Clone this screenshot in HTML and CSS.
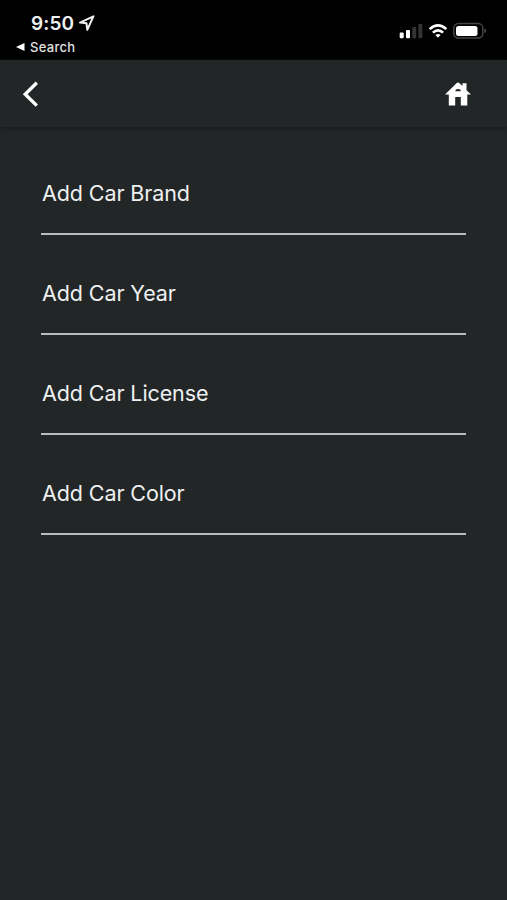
FILE: index.html
```html
<!DOCTYPE html>
<html lang="en">
<head>
<meta charset="utf-8">
<meta name="viewport" content="width=device-width">
<title>Add Car</title>
<link rel="stylesheet" href="styles.css">
</head>
<body>
<header class="status">
  <div class="status-left">
    <div class="clock"><span class="time">9:50</span>
      <svg class="location" width="18" height="18" viewBox="0 0 18 18"><path d="M2 8.6 15.4 2.3 9.3 15.8 8.5 9.3Z" fill="none" stroke="#f2f2f2" stroke-width="2" stroke-linejoin="round"/></svg>
    </div>
    <div class="return"><svg width="9" height="8" viewBox="0 0 9 8"><path d="M0 4 8.5 0V8Z" fill="#fff"/></svg><span class="return-label">Search</span></div>
  </div>
  <svg class="indicators" width="88" height="18" viewBox="0 0 88 18">
    <g fill="#fff"><rect x="0.7" y="10.5" width="4" height="5.7" rx="1"/><rect x="7" y="8" width="4" height="8.2" rx="1"/></g>
    <g fill="#333"><rect x="13.2" y="5" width="4" height="11.2" rx="1"/><rect x="19.4" y="2" width="4" height="14.2" rx="1"/></g>
    <g fill="none" stroke="#fff" stroke-width="2.6"><path d="M30.7 7.1Q39-.5 47.3 7.1"/><path d="M33.9 10.6Q39 6 44.1 10.6"/></g>
    <path d="M36.4 12.9Q39 10.9 41.6 12.9L39 15.7Z" fill="#fff"/>
    <rect x="54.8" y="1.6" width="29" height="14.5" rx="4.5" fill="none" stroke="#444" stroke-width="1.5"/>
    <rect x="57" y="3.9" width="21.5" height="10" rx="2.5" fill="#fff"/>
    <path d="M85.3 6.5Q87.4 7 87.4 8.8T85.3 11Z" fill="#444"/>
  </svg>
</header>
<nav class="bar">
  <svg width="20" height="30" viewBox="0 0 20 30"><path d="M16.8 3.8 5.2 15.2 16.8 26.6" fill="none" stroke="#fff" stroke-width="3.4"/></svg>
  <svg width="26" height="24" viewBox="0 0 26 24"><path fill="#fff" fill-rule="evenodd" d="M0 12.5 11.5 1.2Q13 -.2 14.5 1.2L17.5 4.1V1.3H21.5V8.2L26 12.5H22.3V23.4H15.8V15H10.2V23.4H3.8V12.5ZM10.4 9.3H15.8Q15.8 6.9 13.1 6.9T10.4 9.3Z"/></svg>
</nav>
<main class="form">
  <div class="field"><span class="brand">Add Car Brand</span></div>
  <div class="field"><span class="year">Add Car Year</span></div>
  <div class="field"><span class="license">Add Car License</span></div>
  <div class="field"><span class="color">Add Car Color</span></div>
</main>
</body>
</html>
```
FILE: styles.css
```css
* { box-sizing: border-box; }
html { background: #222627; }
body {
  margin: 0;
  height: 900px;
  overflow: hidden;
  background: #222627;
  color: #eff1f1;
  font-family: Inter, "Liberation Sans", sans-serif;
}
svg { display: block; flex: none; }
.status {
  display: flex;
  justify-content: space-between;
  height: 60px;
  padding: 12px 20px 0 16px;
  background: #000;
}
.clock { display: flex; align-items: center; gap: 4px; height: 22px; padding-left: 15px; }
.time { font-size: 19px; font-weight: 600; line-height: 22px; padding-top: 1px; letter-spacing: 0.1px; }
.return { display: flex; align-items: center; gap: 5px; height: 16px; margin-top: 5px; }
.return-label { font-size: 13px; font-weight: 500; line-height: 16px; letter-spacing: 0.3px; color: #e2e2e2; }
.indicators { margin-top: 10px; }
.bar {
  display: flex;
  align-items: center;
  justify-content: space-between;
  height: 67px;
  padding: 0 36px 0 20px;
  box-shadow: 0 1px 5px #15191a;
}
.form { padding: 8px 41px 0; }
.field {
  height: 100px;
  padding: 44px 0 0 1px;
  border-bottom: 2px solid #b9bcbc;
  font-size: 21.5px;
  line-height: 28px;
  letter-spacing: -0.1px;
  white-space: nowrap;
}
```
